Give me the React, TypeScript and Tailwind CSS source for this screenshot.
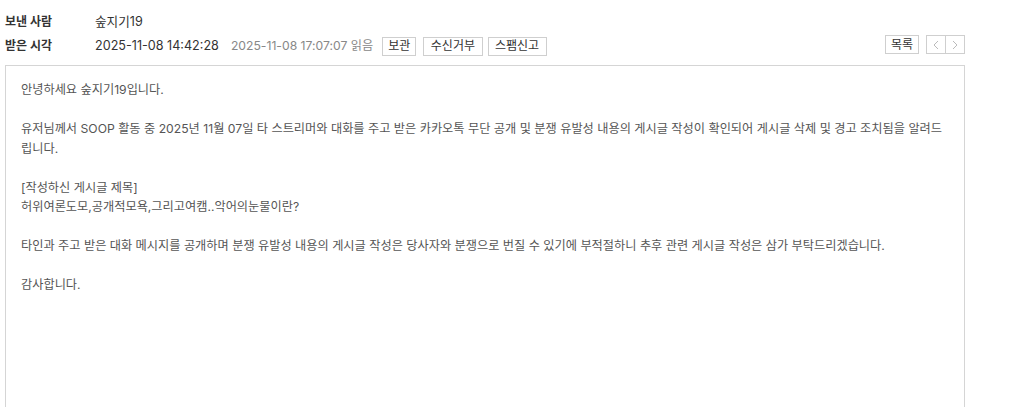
import React from "react";

const font = { fontFamily: 'Inter, "Noto Sans CJK KR", sans-serif' };

function Btn({ children, className = "" }: { children: React.ReactNode; className?: string }) {
  return (
    <span
      className={
        "inline-flex h-[19px] items-center border border-[#cfcfcf] bg-white text-[12px] leading-none text-[#333] " +
        className
      }
    >
      {children}
    </span>
  );
}

export default function App() {
  return (
    <div className="min-h-[407px] bg-white" style={font}>
      <div className="w-[965px] pl-[5px] pt-[10px]">
        <div className="flex h-[24px] items-center">
          <span className="w-[90px] text-[12px] font-bold text-[#333]">보낸 사람</span>
          <span className="text-[12.6px] text-[#333]">숲지기19</span>
        </div>
        <div className="flex h-[24px] items-center">
          <span className="w-[90px] text-[12px] font-bold text-[#333]">받은 시각</span>
          <span className="text-[12.6px] text-[#333]">2025-11-08 14:42:28</span>
          <span className="ml-[12px] text-[12.2px] text-[#888]">2025-11-08 17:07:07 읽음</span>
          <div className="ml-[9px] flex items-center">
            <Btn className="px-[5px]">보관</Btn>
            <Btn className="ml-[7px] px-[6.5px]">수신거부</Btn>
            <Btn className="ml-[5px] px-[6.5px]">스팸신고</Btn>
          </div>
          <div className="ml-auto mt-[1px] flex items-center gap-[7px] self-start">
            <Btn className="px-[5px]">목록</Btn>
            <div className="flex h-[19px] border border-[#cfcfcf]">
              <span className="flex w-[19px] items-center justify-center border-r border-[#cfcfcf]">
                <svg width="6" height="10" viewBox="0 0 6 10" fill="none">
                  <polyline points="5,1 1,5 5,9" stroke="#bbb" strokeWidth="1" />
                </svg>
              </span>
              <span className="flex w-[18px] items-center justify-center">
                <svg width="6" height="10" viewBox="0 0 6 10" fill="none">
                  <polyline points="1,1 5,5 1,9" stroke="#bbb" strokeWidth="1" />
                </svg>
              </span>
            </div>
          </div>
        </div>
        <div className="mt-[7px] min-h-[360px] border border-[#d5d5d5] px-[15px] pt-[14px] text-[12.2px] leading-[19.5px] text-[#555]">
          <p>안녕하세요 숲지기19입니다.</p>
          <p>&nbsp;</p>
          <p>
            유저님께서 SOOP 활동 중 2025년 11월 07일 타 스트리머와 대화를 주고 받은 카카오톡 무단 공개 및 분쟁 유발성 내용의 게시글 작성이 확인되어 게시글 삭제 및 경고 조치됨을 알려드립니다.
          </p>
          <p>&nbsp;</p>
          <p>[작성하신 게시글 제목]</p>
          <p>허위여론도모,공개적모욕,그리고여캠..악어의눈물이란?</p>
          <p>&nbsp;</p>
          <p>
            타인과 주고 받은 대화 메시지를 공개하며 분쟁 유발성 내용의 게시글 작성은 당사자와 분쟁으로 번질 수 있기에 부적절하니 추후 관련 게시글 작성은 삼가 부탁드리겠습니다.
          </p>
          <p>&nbsp;</p>
          <p>감사합니다.</p>
        </div>
      </div>
    </div>
  );
}
